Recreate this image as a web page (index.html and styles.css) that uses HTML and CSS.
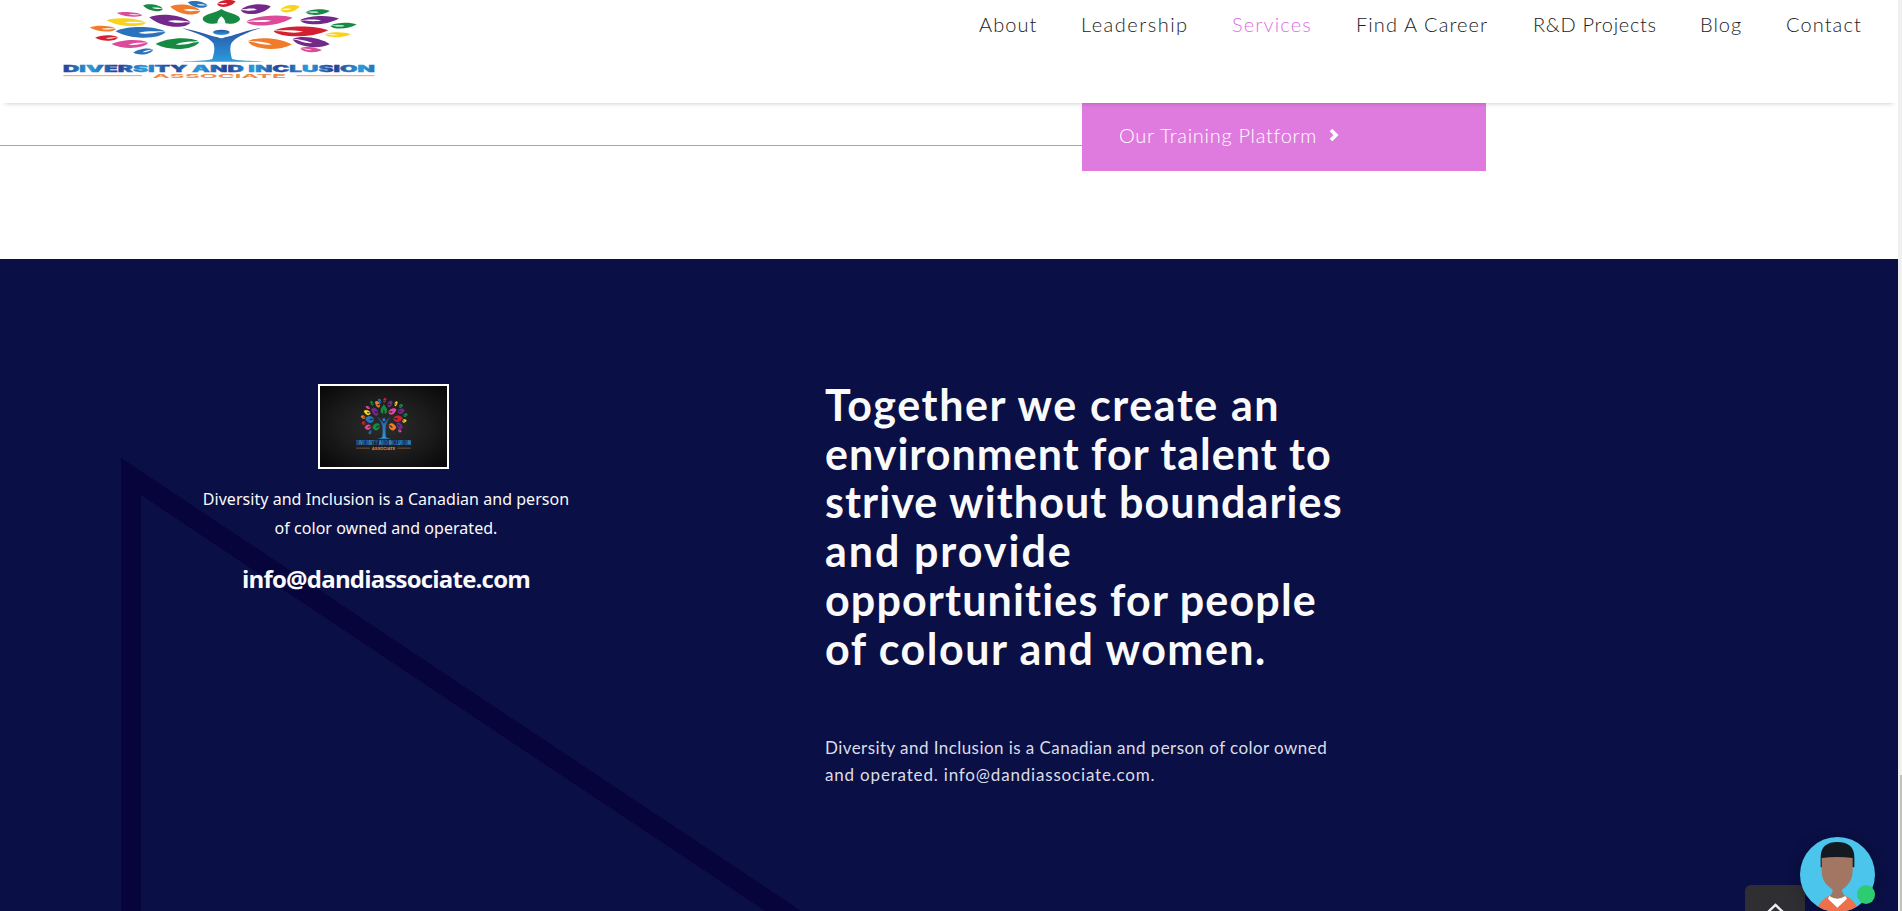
FILE: index.html
```html
<!DOCTYPE html>
<html lang="en">
<head>
<meta charset="utf-8">
<title>Diversity and Inclusion Associate</title>
<link rel="stylesheet" href="styles.css">
</head>
<body>
<div class="page">
  <header class="header">
    <svg class="logo" viewBox="39 0 936 240" preserveAspectRatio="none">
      <defs>
        <linearGradient id="trunk" x1="0" y1="0" x2="0" y2="1"><stop offset="0" stop-color="#2a50a3"/><stop offset="1" stop-color="#2a9bdc"/></linearGradient>
        <linearGradient id="word" x1="0" y1="0" x2=".087" y2="0" spreadMethod="reflect"><stop offset="0" stop-color="#243f92"/><stop offset="1" stop-color="#2a9bdb"/></linearGradient>
        <path id="leaf" d="M-1.05-.2C-.6-1.1 .5-1.25 1.03-.15C.7-.2 .2-.3-.1 .1C.1 .32 .45 .3 .75 0L1.03-.05C.85 1.15-.35 1.45-1.05-.2Z"/>
        <g id="tree">
          <g fill="#f9d21c"><use href="#leaf" transform="translate(229 66) rotate(3) scale(57 12)"/><use href="#leaf" transform="translate(720 26) rotate(-8) scale(-28 11)"/><use href="#leaf" transform="translate(863 104) scale(-37 8)"/></g>
          <g fill="#dc4a9a"><use href="#leaf" transform="translate(239 43) rotate(4) scale(37 7)"/><use href="#leaf" transform="translate(240 132) rotate(-3) scale(53 13)"/><use href="#leaf" transform="translate(658 61) rotate(-4) scale(-67 15)"/><use href="#leaf" transform="translate(783 149) rotate(6) scale(-31 8)"/></g>
          <g fill="#168a43"><use href="#leaf" transform="translate(309 23) rotate(8) scale(29 10)"/><use href="#leaf" transform="translate(383 131) rotate(-4) scale(63 17)"/><use href="#leaf" transform="translate(803 36) rotate(-2) scale(-35 9)"/><use href="#leaf" transform="translate(880 77) rotate(-2) scale(-38 9)"/><path d="M514 27C528 38 568 42 570 56C570 66 548 75 526 70Q526 58 514 49Q502 58 502 70C480 75 458 66 458 56C460 42 500 38 514 27Z"/></g>
          <g fill="#73298a"><use href="#leaf" transform="translate(360 62) rotate(6) scale(60 18)"/><use href="#leaf" transform="translate(617 27) rotate(-6) scale(-44 15)"/><use href="#leaf" transform="translate(808 60) rotate(-2) scale(-56 13)"/><use href="#leaf" transform="translate(783 127) rotate(9) scale(-54 15)"/></g>
          <g fill="#f17b2b"><use href="#leaf" transform="translate(406 28) rotate(7) scale(44 15)"/><use href="#leaf" transform="translate(159 86) rotate(2) scale(38 9)"/><use href="#leaf" transform="translate(659 131) rotate(5) scale(-63 17)"/></g>
          <g fill="#d32031"><use href="#leaf" transform="translate(529 10) rotate(-6) scale(-27 11)"/><use href="#leaf" transform="translate(170 114) rotate(-2) scale(33 9)"/><use href="#leaf" transform="translate(752 94) scale(-79 16)"/></g>
          <g fill="#2a72bb"><use href="#leaf" transform="translate(443 13) rotate(8) scale(29 10)"/><use href="#leaf" transform="translate(272 97) scale(72 17)"/><use href="#leaf" transform="translate(280 155) rotate(-10) scale(29 9)"/></g>
          <g fill="url(#trunk)"><ellipse cx="514" cy="97" rx="25" ry="8"/><path d="M396 84C445 93 475 106 503 112Q514 118 525 112C555 106 585 92 634 83C590 98 555 112 544 130C538 145 542 160 546 177C570 183 610 182 640 185H395C430 182 465 184 487 177C492 160 496 145 490 130C475 110 440 100 396 84Z"/></g>
          <text class="mark-name" x="39" y="215" textLength="936" lengthAdjust="spacingAndGlyphs">DIVERSITY AND INCLUSION</text>
          <text class="mark-sub" x="308" y="234" textLength="400" lengthAdjust="spacingAndGlyphs">ASSOCIATE</text>
          <path d="M40 227H276M740 227H973" stroke="#f2a263" stroke-width="3"/>
        </g>
      </defs>
      <use href="#tree"/>
    </svg>
    <nav class="nav">
      <a class="n-about">About</a><a class="n-lead">Leadership</a><a class="n-serv">Services</a><a class="n-career">Find A Career</a><a class="n-rd">R&amp;D Projects</a><a class="n-blog">Blog</a><a class="n-contact">Contact</a>
    </nav>
  </header>
  <section class="cta">
    <div class="rule"></div>
    <a class="button"><span class="button-label">Our Training Platform</span><svg width="10" height="14" viewBox="0 0 10 14"><path d="M2 2L7 7L2 12" fill="none" stroke="#fff" stroke-width="3.6"/></svg></a>
  </section>
  <footer class="footer">
    <svg class="triangle" width="720" height="453" viewBox="0 0 720 453"><path d="M0 0L680 453H644L20 37V453H0Z" fill="#06043a"/></svg>
    <div class="about">
      <div class="badge"><svg viewBox="39 0 936 240" preserveAspectRatio="none"><use href="#tree"/></svg></div>
      <p class="blurb">Diversity and Inclusion is a Canadian and person<br>of color owned and operated.</p>
      <p class="email">info@dandiassociate.com</p>
    </div>
    <div class="mission">
      <h2><span class="h1">Together we create an</span><span class="h2">environment for talent to</span><span class="h3">strive without boundaries</span><span class="h4">and provide</span><span class="h5">opportunities for people</span><span class="h6">of colour and women.</span></h2>
      <p><span class="m1">Diversity and Inclusion is a Canadian and person of color owned</span><span class="m2">and operated. info@dandiassociate.com.</span></p>
    </div>
  </footer>
</div>
<div class="scroll"><div class="thumb"></div></div>
<div class="to-top"><svg width="60" height="26" viewBox="0 0 60 26"><path d="M22 28L30.500 20L39 28" fill="none" stroke="#eee" stroke-width="2.4"/></svg></div>
<div class="chat">
  <svg width="75" height="75" viewBox="0 0 225 225"><defs><clipPath id="round"><circle cx="112.500" cy="112.500" r="112.500"/></clipPath></defs>
    <g clip-path="url(#round)"><path fill="#4cc5ec" d="M0 0H225V225H0Z"/><path fill="#141820" d="M62 91V60C62 28 82 15 112 15S163 28 163 60V91Z"/><path fill="#a27663" d="M65 63Q112 57 158 63V102C158 130 142 148 126 158Q126 170 140 180L112 205L85 180Q98 171 98 158C80 146 65 130 65 102Z"/><path fill="#ed704b" d="M50 213Q68 184 87 177L112 206L137 177Q158 184 174 213L174 225H50Z"/><path fill="#fff" d="M88 177Q112 193 136 177L141 185L112 212L84 185Z"/></g></svg>
  <span class="online"></span>
</div>
</body>
</html>
```
FILE: styles.css
```css
* { box-sizing: border-box; }
body { margin: 0; display: flex; height: 911px; overflow: hidden; background: #fff; font-family: Lato, sans-serif; }
.page { width: 1898px; height: 911px; display: flex; flex-direction: column; overflow: hidden; }
.header { position: relative; z-index: 2; flex: none; height: 103px; padding: 0 37px 0 63px; display: flex; justify-content: space-between; align-items: flex-start; background: #fff; box-shadow: 0 5px 5px -5px rgba(0,0,0,.25); }
.logo { width: 312px; height: 80px; }
.mark-name { font: 900 27px Inter, sans-serif; fill: url(#word); stroke: url(#word); stroke-width: 1px; }
.mark-sub { font: 700 16px Inter, sans-serif; fill: #ee8844; }
.nav { display: flex; gap: 45px; padding-top: 12px; font-size: 20px; line-height: 24px; font-weight: 300; color: #222; white-space: nowrap; }
.nav a { letter-spacing: 1px; }
.nav .n-about { width: 57px; letter-spacing: 1.1px; }
.nav .n-lead { width: 106px; letter-spacing: 1.5px; }
.nav .n-serv { width: 79px; letter-spacing: 1.15px; color: #df6fdf; }
.nav .n-career { width: 132px; letter-spacing: 1.1px; }
.nav .n-rd { width: 122px; letter-spacing: .7px; }
.nav .n-blog { width: 41px; }
.nav .n-contact { width: 75px; letter-spacing: 1.1px; }
.cta { flex: none; height: 156px; display: flex; align-items: flex-start; }
.rule { width: 1082px; height: 1px; margin-top: 42px; background: #df7bde; }
.button { width: 404px; height: 68px; padding: 0 37px 4px; display: flex; align-items: center; gap: 13px; background: #df7bde; color: #fff; font-size: 20px; font-weight: 300; white-space: nowrap; }
.button-label { width: 197px; margin-top: -1px; letter-spacing: .7px; }
.footer { position: relative; flex: 1; display: flex; align-items: flex-start; padding: 125px 0 0 186px; background: #0a0f45; color: #fafafa; }
.triangle { position: absolute; left: 121px; top: 199px; }
.about { position: relative; width: 400px; display: flex; flex-direction: column; align-items: center; text-align: center; }
.badge { width: 131px; height: 85px; margin-right: 5px; border: 2px solid #fff; display: flex; justify-content: center; padding-top: 12px; background: radial-gradient(ellipse at center, #2c2c2c 0, #1c1c1c 50%, #070707 100%); }
.badge svg { width: 55px; height: 53px; }
.blurb { margin: 16px 0 0; font: 16px/29px "Noto Sans", sans-serif; letter-spacing: .04px; white-space: nowrap; }
.email { margin: 19px 0 0; font: 700 24px/33px "Open Sans", sans-serif; letter-spacing: -.8px; white-space: nowrap; }
.mission { margin-left: 239px; width: 560px; white-space: nowrap; }
.mission span { display: block; }
.mission h2 { margin: -3px 0 0; font-size: 43px; line-height: 48.7px; font-weight: 700; }
.h1 { letter-spacing: 1.6px; }
.h2 { letter-spacing: 1px; }
.h3 { letter-spacing: 1.1px; }
.h4 { letter-spacing: 2px; }
.h5 { letter-spacing: 1.15px; }
.h6 { letter-spacing: 1.5px; }
.mission p { margin: 61px 0 0; font-size: 17px; line-height: 27px; color: #dcdde6; }
.m1 { letter-spacing: .44px; }
.m2 { letter-spacing: .82px; }
.scroll { width: 4px; height: 911px; padding: 775px 0 0 2px; background: #f0f0f0; }
.thumb { height: 136px; background: #c0c0c0; }
.to-top { position: absolute; z-index: 3; left: 1745px; top: 885px; width: 60px; height: 26px; border-radius: 6px 6px 0 0; background: #2f2f33; overflow: hidden; }
.chat { position: absolute; z-index: 4; left: 1800px; top: 837px; width: 75px; height: 74px; border-radius: 50%; box-shadow: 0 2px 14px rgba(0,0,0,.25); }
.online { position: absolute; left: 57px; top: 48px; width: 18px; height: 19px; border-radius: 50%; background: #2ecc71; }
```
